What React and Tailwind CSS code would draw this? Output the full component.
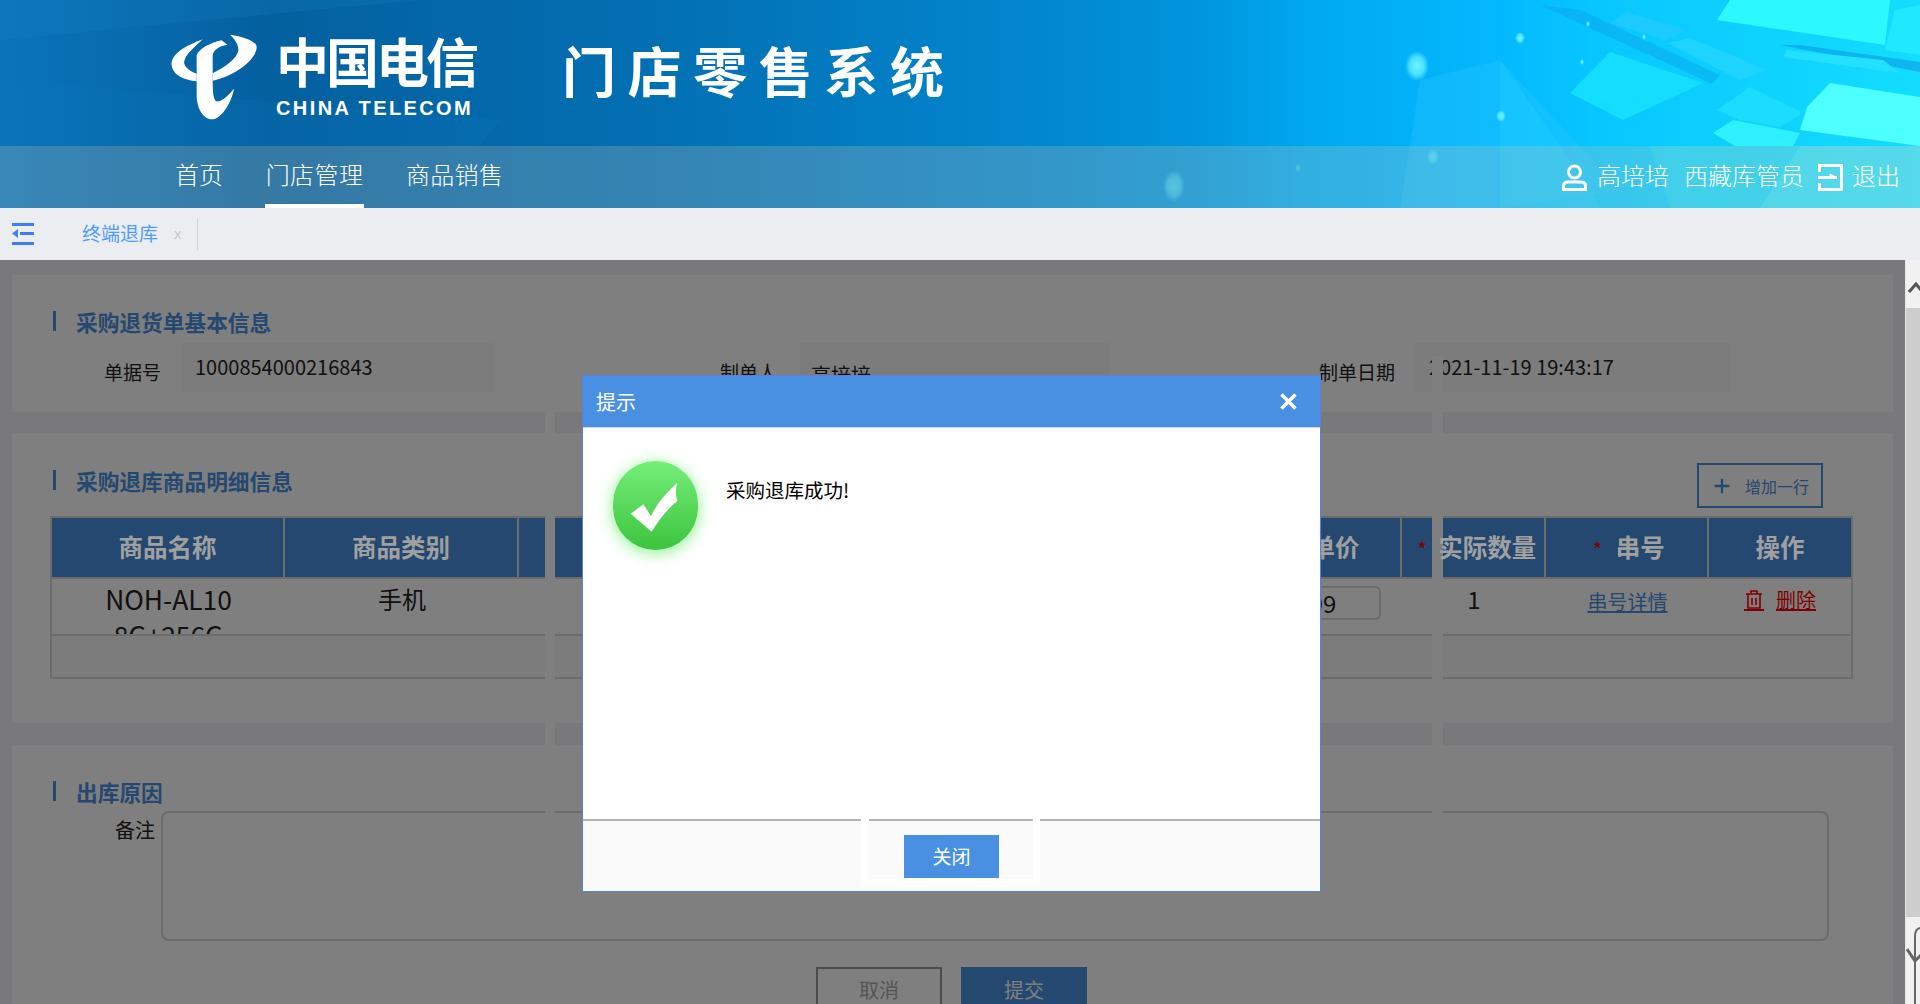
import React from 'react';
import { Plus } from 'lucide-react';

const cjk = "font-['Noto_Sans_CJK_SC','Noto_Sans',sans-serif]";

function Backdrop() {
  return (
    <svg className="absolute inset-0 h-full w-full" viewBox="0 0 1920 208" preserveAspectRatio="none">
      <defs>
        <radialGradient id="glow">
          <stop offset="0" stopColor="#6ff4ff" stopOpacity="1" />
          <stop offset="0.6" stopColor="#5cecff" stopOpacity="0.8" />
          <stop offset="1" stopColor="#5cecff" stopOpacity="0" />
        </radialGradient>
      </defs>
      <polygon points="0,0 420,0 0,40" fill="#1a86c8" opacity="0.2" />
      <polygon points="0,80 500,120 480,146 0,146" fill="#0a78bd" opacity="0.2" />
      <polygon points="1420,80 1500,60 1620,190 1500,208 1400,208" fill="#2fc8ff" opacity="0.3" />
      <polygon points="1500,60 1560,146 1600,208 1500,208" fill="#1fd0ff" opacity="0.4" />
      <polygon points="1540,5 1580,10 1720,75 1712,84 1660,60" fill="#0a9de4" opacity="0.4" />
      <polygon points="1610,23 1627,12 1687,30 1667,40" fill="#1ccaff" />
      <polygon points="1667,43 1690,38 1767,70 1740,80" fill="#1ed4ff" />
      <polygon points="1570,93 1610,52 1703,83 1623,120" fill="#14deff" />
      <polygon points="1717,110 1750,87 1803,113 1780,127 1740,120" fill="#1cdcff" />
      <polygon points="1713,133 1733,120 1800,133 1793,146 1735,146" fill="#2ef0ff" />
      <polygon points="1780,45 1800,45 1920,62 1920,72" fill="#0a8fe0" opacity="0.5" />
      <polygon points="1787,50 1883,60 1900,73 1783,57" fill="#24e0ff" />
      <polygon points="1717,20 1730,0 1890,0 1885,45" fill="#2cf8ff" />
      <polygon points="1895,10 1920,5 1920,55 1885,50" fill="#20e8ff" />
      <polygon points="1830,83 1920,97 1920,146 1800,130 1807,107" fill="#4dffff" />
      <polygon points="1650,146 1920,146 1920,208 1670,208" fill="#27e0f4" opacity="0.35" />
      <polygon points="1800,146 1920,146 1920,208 1760,208" fill="#60f0ff" opacity="0.3" />
      <ellipse cx="1417" cy="66" rx="12" ry="15" fill="url(#glow)" />
      <ellipse cx="1520" cy="38" rx="5" ry="6" fill="url(#glow)" />
      <ellipse cx="1501" cy="116" rx="5" ry="6" fill="url(#glow)" />
      <ellipse cx="1588" cy="24" rx="2" ry="3" fill="url(#glow)" />
      <ellipse cx="1644" cy="37" rx="2" ry="3" fill="url(#glow)" />
      <ellipse cx="1582" cy="62" rx="2" ry="3" fill="url(#glow)" />
      <ellipse cx="1433" cy="157" rx="6" ry="8" fill="url(#glow)" opacity="0.5" />
      <ellipse cx="1174" cy="186" rx="11" ry="16" fill="url(#glow)" opacity="0.5" />
      <ellipse cx="1298" cy="168" rx="3" ry="4" fill="url(#glow)" opacity="0.4" />
    </svg>
  );
}

function Logo() {
  return (
    <svg className="w-[90px] h-[94px] shrink-0" viewBox="60 60 270 270">
      <g fill="#fff">
        <path d="M158 82 C110 100 62 125 65 160 C68 190 105 205 140 208 L140 185 C115 175 95 160 105 140 C115 120 135 105 158 82Z" />
        <path d="M240 68 C270 72 320 85 320 105 C320 140 260 190 188 206 L188 184 C225 165 262 140 265 115 C266 98 255 82 240 68Z" />
        <path d="M215 85 C180 92 145 112 140 130 L140 250 C140 290 160 322 185 322 C215 322 245 270 252 230 C235 250 215 270 200 268 C190 265 188 240 188 200 L188 130 C190 115 205 102 232 98Z" />
      </g>
    </svg>
  );
}

function TopBar() {
  return (
    <header className={`relative h-[208px] w-full text-white bg-[linear-gradient(90deg,#0a74ba_0%,#04609f_14%,#0370b4_35%,#0288d0_55%,#0094dc_62%,#00a8f0_68%,#04b8ff_78%,#08c8ff_84%,#14dcff_100%)] ${cjk}`}>
      <Backdrop />
      <div className="relative flex h-[146px] items-start pl-[170px] pt-[30px]">
        <Logo />
        <div className="ml-[16px] flex w-[200px] flex-col">
          <span className="text-[53px] leading-[60px] font-bold tracking-[-3px] whitespace-nowrap">中国电信</span>
          <span className="mt-[9px] font-['Liberation_Sans',sans-serif] text-[20px] leading-[18px] font-bold tracking-[2.4px] whitespace-nowrap">CHINA TELECOM</span>
        </div>
        <span className="ml-[86px] mt-[10px] text-[54px] leading-[60px] font-bold tracking-[11.6px] whitespace-nowrap">门店零售系统</span>
      </div>
      <nav className="relative flex h-[62px] items-stretch justify-between bg-[#c8c4b4]/25 pl-[175px] pr-[20px] text-[24px] font-light">
        <div className="flex gap-[42px]">
          <a className="flex items-center pb-[6px]">首页</a>
          <a className="flex w-[99px] items-center justify-center border-b-4 border-white pb-[2px] tracking-[0.4px]">门店管理</a>
          <a className="flex items-center pb-[6px] tracking-[0.3px]">商品销售</a>
        </div>
        <div className="flex items-center">
          <svg className="h-[27px] w-[25px]" viewBox="0 0 25 27" fill="none" stroke="#fff" strokeWidth="3">
            <circle cx="12.5" cy="8" r="6" />
            <path d="M1.5 25.5 V22 Q1.5 18 6 18 H19 Q23.500 18 23.500 22 V25.500 Z" />
          </svg>
          <span className="relative -top-[2px] ml-[10px]">高培培</span>
          <span className="relative -top-[2px] ml-[15px]">西藏库管员</span>
          <svg className="ml-[14px] h-[27px] w-[25px]" viewBox="0 0 25 27" fill="none" stroke="#fff" strokeWidth="3">
            <path d="M1.5 8 V1.500 H23.500 V25.500 H1.500 V19" />
            <path d="M0 13.500 H19" />
            <path d="M12 10 L19 13.500 L12 13.500Z" fill="#fff" strokeWidth="1" />
          </svg>
          <span className="relative -top-[2px] ml-[9px]">退出</span>
        </div>
      </nav>
    </header>
  );
}

function TabBar() {
  return (
    <div className={`flex h-[52px] items-center bg-[#ecedf1] ${cjk}`}>
      <svg className="ml-[12px] h-[22px] w-[22px]" viewBox="0 0 22 22" fill="#3d7df5">
        <rect y="0" width="22" height="3" />
        <rect y="19" width="22" height="3" />
        <rect x="8" y="9" width="14" height="3" />
        <path d="M0 10.500 L6 6 V15Z" />
      </svg>
      <span className="ml-[48px] pb-[2px] text-[19px] text-[#4b9cff]">终端退库</span>
      <span className="ml-[16px] font-['Liberation_Sans',sans-serif] text-[15px] text-[#c8c9d0]">x</span>
      <span className="ml-[15px] h-[32px] w-px bg-[#d5d5d8]" />
    </div>
  );
}

function SectionTitle({ children }) {
  return (
    <div className="flex h-[20px] items-center pl-[41px]">
      <span className="h-[20px] w-[3px] bg-[#4a90e2]" />
      <span className="ml-[20px] mt-[1px] text-[21.7px] leading-[24px] font-bold whitespace-nowrap text-[#4a90e2]">{children}</span>
    </div>
  );
}

function Field({ label, value, labelClass, inputClass }) {
  return (
    <div className="flex items-start">
      <span className={`mt-[15px] text-right text-[19px] leading-[28px] text-[#222] ${labelClass}`}>{label}</span>
      <div className={`flex h-[49px] items-center overflow-hidden bg-[#f8f8f8] text-[20px] text-[#222] ${inputClass}`}>{value}</div>
    </div>
  );
}

function Th({ w, children, className = '' }) {
  return (
    <div className={`flex h-full shrink-0 items-center justify-center border-r-2 border-[#d9d9d9] text-[24.5px] font-bold last:border-r-0 ${w} ${className}`}>
      {children}
    </div>
  );
}

// header labels sit over the page mask, they read lighter than the rest
function ThText({ children }) {
  return <span className="relative z-10 text-[#a0a0a0]">{children}</span>;
}

function Td({ w, children }) {
  return <div className={`h-full shrink-0 text-center text-[24px] leading-[40px] text-[#222] ${w}`}>{children}</div>;
}

function GoodsTable() {
  return (
    <div className="ml-[38px] mt-[8px] w-[1803px] border-x-2 border-y-2 border-[#d9d9d9]">
      <div className="flex h-[59px] bg-[#4a90e2]">
        <Th w="w-[233px]"><ThText>商品名称</ThText></Th>
        <Th w="w-[234px]"><ThText>商品类别</ThText></Th>
        <Th w="w-[751px]" />
        <Th w="w-[132px]"><ThText>单价</ThText></Th>
        <Th w="w-[144px]" className="pl-[8px]">
          <span className="mr-[12px] text-[17px] text-[#ff0000]">*</span><ThText>实际数量</ThText>
        </Th>
        <Th w="w-[163px]" className="pl-[5px]">
          <span className="mr-[14px] text-[17px] text-[#ff0000]">*</span><ThText>串号</ThText>
        </Th>
        <Th w="w-[142px]"><ThText>操作</ThText></Th>
      </div>
      <div className="flex h-[57px] overflow-hidden border-t-2 border-[#d9d9d9] bg-white">
        <Td w="w-[233px]">
          <div className="pt-[2px] text-[26.4px] leading-[36px]">NOH-AL10<br />8G+256G</div>
        </Td>
        <Td w="w-[234px]">手机</Td>
        <Td w="w-[751px]" />
        <Td w="w-[132px]">
          <div className="mt-[7px] ml-[5px] h-[34px] w-[106px] rounded-[6px] border-2 border-[#d9d9d9] pl-[6px] text-left leading-[30px]">5999</div>
        </Td>
        <Td w="w-[144px]">1</Td>
        <Td w="w-[163px]">
          <a className="relative top-[1px] text-[20px] text-[#4a90e2] underline">串号详情</a>
        </Td>
        <Td w="w-[142px]">
          <a className="relative top-[2px] inline-flex items-center gap-[12px] text-[20px] leading-[26px] text-[#ff0000] underline">
            <svg className="h-[22px] w-[20px] border-b-2 border-[#ff0000]" viewBox="0 0 20 20" fill="none" stroke="#ff0000" strokeWidth="1.600">
              <path d="M2 5 H18 M7 5 V2 H13 V5 M4 5 V19 H16 V5 M8 9 V16 M12 9 V16" />
            </svg>
            删除
          </a>
        </Td>
      </div>
      <div className="h-[43px] border-t-2 border-[#d9d9d9] bg-[#f8f8f8]" />
    </div>
  );
}

function Content() {
  return (
    <div className={`relative flex h-[744px] overflow-hidden ${cjk}`}>
      <main className="relative w-[1905px] bg-[#f2f3f7] px-[12px] pt-[15px]">
        <section className="h-[137px] bg-white pt-[36px]">
          <SectionTitle>采购退货单基本信息</SectionTitle>
          <div className="mt-[12px] flex">
            <Field label="单据号" value="1000854000216843" labelClass="w-[149px]" inputClass="ml-[20px] w-[314px] pb-[1px] pl-[14px]" />
            <Field label="制单人" value="高培培" labelClass="ml-[82px] w-[200px]" inputClass="ml-[23px] w-[310px] pt-[14px] pl-[11px]" />
            <Field label="制单日期" value="2021-11-19 19:43:17" labelClass="ml-[85px] w-[200px]" inputClass="ml-[20px] w-[315px] pb-[1px] pl-[14px]" />
          </div>
        </section>

        <section className="mt-[21px] h-[290px] bg-white pt-[30px]">
          <div className="flex items-start justify-between pr-[70px]">
            <div className="mt-[7px]">
              <SectionTitle>采购退库商品明细信息</SectionTitle>
            </div>
            <button className="flex h-[45px] w-[126px] items-center justify-center gap-[12px] border-2 border-[#4a90e2] text-[16px] text-[#4a90e2]">
              <Plus className="h-[22px] w-[22px]" strokeWidth={2.5} />
              增加一行
            </button>
          </div>
          <GoodsTable />
        </section>

        <section className="mt-[22px] h-[300px] bg-white pt-[36px]">
          <SectionTitle>出库原因</SectionTitle>
          <div className="mt-[10px] flex items-start">
            <span className="mt-[5px] w-[143px] text-right text-[20px] leading-[28px] text-[#222]">备注</span>
            <div className="ml-[6px] h-[130px] w-[1668px] rounded-[8px] border-2 border-[#d9d9d9]" />
          </div>
          <div className="mt-[26px] flex gap-[19px] pl-[804px]">
            <button className="h-[46px] w-[126px] border-2 border-[#999999] text-[20px] text-[#aaaaaa]">取消</button>
            <button className="h-[46px] w-[126px] bg-[#4a90e2] text-[20px] text-white">提交</button>
          </div>
        </section>

        {/* seams in the captured picture */}
        <div className="absolute left-[545px] top-[96px] h-[474px] w-[10px] bg-white" />
        <div className="absolute left-[1432px] top-[96px] h-[474px] w-[11px] bg-white" />

        <div className="absolute inset-0 bg-[rgba(0,0,0,0.5)]" />
      </main>

      <aside className="relative flex w-[15px] flex-col border-l border-[#e8e8e8] bg-[#cdcdcd]">
        <div className="h-[48px] bg-[#f1f1f1] pt-[22px]">
          <svg className="ml-[2px] h-[12px] w-[13px]" viewBox="0 0 13 12" fill="none" stroke="#555" strokeWidth="3">
            <path d="M1 10 L8 2 L13 8" />
          </svg>
        </div>
        <div className="flex-1" />
        <div className="h-[87px] bg-[#f1f1f1]">
          <svg className="mt-[8px] h-[79px] w-[15px]" viewBox="0 0 15 79" fill="none" stroke="#666" strokeWidth="2">
            <path d="M15 3 Q9 3 9 12 V79" />
            <path d="M1 24 L9 36 L15 30" strokeWidth="3" />
          </svg>
        </div>
      </aside>
    </div>
  );
}

function Dialog() {
  return (
    <div className={`absolute left-[582px] top-[375px] z-20 flex h-[517px] w-[739px] flex-col border border-[#5b7fdc] bg-white ${cjk}`}>
      <div className="flex h-[52px] items-center justify-between border-b border-[#cfd6e0] bg-[#4a90e2] pl-[13px] pr-[23px] text-white">
        <span className="text-[20px]">提示</span>
        <svg className="h-[17px] w-[17px]" viewBox="0 0 17 17" stroke="#fff" strokeWidth="3.500">
          <path d="M1.500 1.500 L15.500 15.500 M15.500 1.500 L1.500 15.500" />
        </svg>
      </div>
      <div className="flex flex-1 pl-[30px] pt-[33px]">
        <div className="h-[89px] w-[85px] rounded-full bg-linear-to-b from-[#74ef78] to-[#3bc43c] shadow-[0_3px_16px_#8af28c]">
          <svg className="h-full w-full" viewBox="69 60 255 267" fill="#fff">
            <path d="M122 218 L160 190 L183 225 C205 180 235 150 262 125 C255 150 258 165 262 180 C230 205 205 240 185 272Z" />
          </svg>
        </div>
        <span className="ml-[28px] mt-[16px] text-[19.5px] leading-[26px] text-black">采购退库成功!</span>
      </div>
      <div className="relative flex h-[72px] justify-center border-t-2 border-[#b4b4b4] bg-[#fafafa] pt-[14px]">
        <button className="h-[43px] w-[95px] bg-[#4a90e2] text-[19px] text-white">关闭</button>
        {/* same seam, around the button */}
        <div className="absolute left-[278px] top-[-2px] h-[68px] w-[8px] bg-white" />
        <div className="absolute left-[450px] top-[-2px] h-[68px] w-[7px] bg-white" />
        <div className="absolute left-[278px] top-[58px] h-[8px] w-[179px] bg-white" />
      </div>
    </div>
  );
}

export default function App() {
  return (
    <div className="relative h-[1004px] w-[1920px] overflow-hidden">
      <TopBar />
      <TabBar />
      <Content />
      <Dialog />
    </div>
  );
}
